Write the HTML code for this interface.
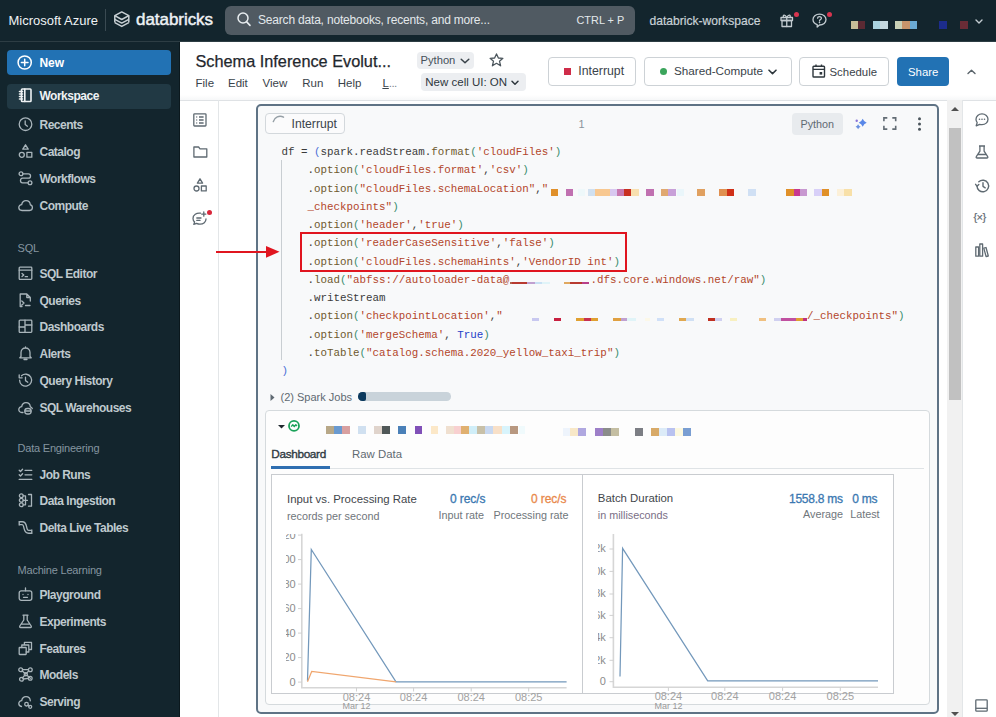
<!DOCTYPE html>
<html><head><meta charset="utf-8"><title>Databricks</title>
<style>
*{margin:0;padding:0;box-sizing:border-box}
html,body{width:996px;height:717px;overflow:hidden;background:#fff;font-family:"Liberation Sans",sans-serif;position:relative}
.a{position:absolute}
.t{position:absolute;white-space:nowrap;line-height:1}
.m{position:absolute;white-space:pre;line-height:1;font-family:"Liberation Mono",monospace;font-size:10.85px;color:#3b3b3b}
svg{position:absolute;overflow:visible}
.nav{font-weight:bold;font-size:12px;letter-spacing:-0.5px;color:#bfc9ce;left:39.5px}
.sec{font-size:11px;color:#8595a0;left:17.5px;letter-spacing:-0.2px}
.ic{fill:none;stroke:#a9b5bb;stroke-width:1.3;stroke-linecap:round;stroke-linejoin:round}
.btn{position:absolute;border:1px solid #cdd2d6;border-radius:4px;background:#fff}
.s{color:#b3462b}.f{color:#6e5a2e}.g{color:#3a8d6e}.b{color:#4a6fd6}.k{color:#1f3fc8}
.px{position:absolute;height:7px}
</style></head><body>
<!-- ============ TOP BAR ============ -->
<div class="a" style="left:0;top:0;width:996px;height:41px;background:#13252d"></div>
<div class="a" style="left:0;top:41px;width:996px;height:1px;background:#2d3d44"></div>
<div class="t" style="left:8.5px;top:13.5px;font-size:13px;color:#eef2f4">Microsoft Azure</div>
<div class="a" style="left:105px;top:9px;width:1px;height:22px;background:#3a4a52"></div>
<!-- databricks logo -->
<svg style="left:113.5px;top:11px" width="17" height="17" viewBox="0 0 17 17"><g fill="none" stroke="#c8d0d4" stroke-width="1.5" stroke-linejoin="round"><path d="M7.75 0.9 L14.8 4.7 L7.75 8.5 L0.8 4.7 Z"/><path d="M0.8 8.3 L7.75 12.1 L14.8 8.3"/><path d="M0.8 11.6 L7.75 15.4 L14.8 11.6"/><path d="M0.8 4.7 V11.6 M14.8 4.7 V11.6"/></g></svg>
<div class="t" style="left:136px;top:11px;font-size:17px;color:#eef2f4;letter-spacing:-0.05px;-webkit-text-stroke:0.45px #eef2f4">databricks</div>
<!-- search -->
<div class="a" style="left:225px;top:5.5px;width:410px;height:29px;border-radius:6px;background:#505a62"></div>
<svg style="left:237px;top:12px" width="14" height="15" viewBox="0 0 14 15"><circle cx="6" cy="6" r="5" fill="none" stroke="#e8edf0" stroke-width="1.5"/><path d="M9.7 9.9 L13 13.4" stroke="#e8edf0" stroke-width="1.6" stroke-linecap="round"/></svg>
<div class="t" style="left:258px;top:13.5px;font-size:12px;letter-spacing:-0.19px;color:#e3e8eb">Search data, notebooks, recents, and more...</div>
<div class="t" style="left:576.5px;top:14.5px;font-size:10.9px;color:#e3e8eb">CTRL + P</div>
<div class="t" style="left:649.5px;top:14.5px;font-size:12.1px;color:#c9d1d6;-webkit-text-stroke:0.2px #c9d1d6">databrick-workspace</div>
<!-- gift -->
<svg style="left:780px;top:13px" width="14" height="15" viewBox="0 0 14 15" class="ic"><g class="ic" style="stroke:#c3ccd1"><rect x="1" y="4.5" width="11.5" height="3"/><rect x="2" y="7.5" width="9.5" height="6"/><path d="M6.75 4.5 V13.5"/><path d="M6.75 4.5 C5 1 2.5 1.5 3.5 4.5 M6.75 4.5 C8.5 1 11 1.5 10 4.5"/></g></svg>
<div class="a" style="left:793.5px;top:11.5px;width:5px;height:5px;border-radius:50%;background:#d8354f"></div>
<!-- help -->
<svg style="left:812px;top:13px" width="16" height="15" viewBox="0 0 16 15"><g class="ic" style="stroke:#c3ccd1"><path d="M7.5 1.2 C11.3 1.2 14 3.6 14 6.6 C14 9.6 11.3 12 7.5 12 L5.2 14 L5.2 11.6 C2.8 10.8 1 8.9 1 6.6 C1 3.6 3.7 1.2 7.5 1.2 Z"/><path d="M5.6 5.2 C5.6 3.1 9.4 3.1 9.4 5.2 C9.4 6.6 7.5 6.6 7.5 8"/></g><circle cx="7.5" cy="9.6" r="0.8" fill="#c3ccd1"/></svg>
<div class="a" style="left:826.5px;top:11.5px;width:5px;height:5px;border-radius:50%;background:#d8354f"></div>
<!-- obfuscated username blocks -->
<div class="a" style="left:850.5px;top:21px;width:7.5px;height:7.5px;background:#c8bd98"></div>
<div class="a" style="left:858px;top:21px;width:6.5px;height:7.5px;background:#5b2a33"></div>
<div class="a" style="left:872.5px;top:21px;width:7.5px;height:7.5px;background:#a9d2df"></div>
<div class="a" style="left:880px;top:21px;width:7.5px;height:7.5px;background:#c4d8df"></div>
<div class="a" style="left:894.5px;top:21px;width:7.5px;height:7.5px;background:#c9d0b6"></div>
<div class="a" style="left:902px;top:21px;width:7.5px;height:7.5px;background:#c8946b"></div>
<div class="a" style="left:909.5px;top:21px;width:7.5px;height:7.5px;background:#6aaad4"></div>
<div class="a" style="left:938.5px;top:21px;width:8px;height:7.5px;background:#1c2c8c"></div>
<div class="a" style="left:960px;top:21px;width:8px;height:7.5px;background:#6a2c36"></div>
<svg style="left:975px;top:18.5px" width="8" height="5" viewBox="0 0 8 5"><path d="M1 1 L4 4 L7 1" fill="none" stroke="#c3ccd1" stroke-width="1.4" stroke-linecap="round" stroke-linejoin="round"/></svg>

<!-- ============ SIDEBAR ============ -->
<div class="a" style="left:0;top:42px;width:180px;height:675px;background:#13252d;border-right:1px solid #0b181d"></div>
<div class="a" style="left:6.5px;top:49.5px;width:164.5px;height:25.5px;border-radius:4px;background:#2272b4"></div>
<svg style="left:17px;top:54.7px" width="16" height="16" viewBox="0 0 16 16"><circle cx="7.7" cy="7.5" r="6.6" fill="none" stroke="#fff" stroke-width="1.5"/><path d="M7.7 4.2 V10.8 M4.4 7.5 H11" stroke="#fff" stroke-width="1.5" stroke-linecap="round"/></svg>
<div class="t nav" style="top:57px;color:#fff;font-size:12px;letter-spacing:-0.1px">New</div>
<div class="a" style="left:6.5px;top:83.5px;width:164.5px;height:25.5px;border-radius:4px;background:#213944"></div>
<svg style="left:17.5px;top:88.2px" width="15" height="15" viewBox="0 0 15 15"><g class="ic" style="stroke:#eef2f4;stroke-width:1.6"><rect x="3.5" y="1" width="9.5" height="12.5" rx="0.8"/><path d="M6.8 1 V13.5 M1.5 3.5 H4.5 M1.5 6 H4.5 M1.5 8.5 H4.5 M1.5 11 H4.5"/></g></svg>
<div class="t nav" style="top:90.4px;color:#eef2f4">Workspace</div>
<svg style="left:17.5px;top:116.5px" width="15" height="15" viewBox="0 0 15 15"><g class="ic"><circle cx="7.5" cy="7.2" r="6.3"/><path d="M7.2 3.8 V7.5 L9.4 9.2"/></g></svg>
<div class="t nav" style="top:118.5px">Recents</div>
<svg style="left:17.5px;top:143.7px" width="15" height="15" viewBox="0 0 15 15"><g class="ic"><path d="M7.5 0.8 L10.2 5.2 H4.8 Z"/><circle cx="3.8" cy="10.8" r="2.5"/><rect x="8.9" y="8.3" width="4.9" height="4.9"/></g></svg>
<div class="t nav" style="top:145.7px">Catalog</div>
<svg style="left:17.5px;top:170.8px" width="15" height="15" viewBox="0 0 15 15"><g class="ic"><circle cx="3" cy="2.8" r="1.9"/><circle cx="12" cy="11.8" r="1.9"/><path d="M4.9 2.8 H10.5 C13.2 2.8 13.2 7.2 10.5 7.2 H4.5 C1.8 7.2 1.8 11.8 4.5 11.8 H10"/></g></svg>
<div class="t nav" style="top:172.8px">Workflows</div>
<svg style="left:17.5px;top:197.9px" width="15" height="15" viewBox="0 0 15 15"><g class="ic"><path d="M4 12.5 C1.8 12.5 0.8 11 0.8 9.6 C0.8 7.9 2.1 6.7 3.7 6.7 C4.1 4 6 2.6 8 2.6 C10.6 2.6 12.2 4.6 12.3 6.8 C13.6 7 14.4 8.2 14.4 9.6 C14.4 11.2 13.2 12.5 11.5 12.5 Z"/></g></svg>
<div class="t nav" style="top:199.9px">Compute</div>
<svg style="left:17.5px;top:266.2px" width="15" height="15" viewBox="0 0 15 15"><g class="ic"><rect x="1.2" y="1.2" width="12.6" height="12.2" rx="0.8"/><path d="M1.2 4.2 H13.8 M4 7.5 L5.8 9 L4 10.5 M7.2 10.7 H9.5"/></g></svg>
<div class="t nav" style="top:268.2px">SQL Editor</div>
<svg style="left:17.5px;top:292.5px" width="15" height="15" viewBox="0 0 15 15"><g class="ic"><path d="M8.8 1 H2.2 V13.5 H4 M8.8 1 L12.3 4.5 V8 M8.8 1 V4.5 H12.3 M3.8 8 L6 10 L3.8 12 M7.5 12.5 H12"/></g></svg>
<div class="t nav" style="top:294.5px">Queries</div>
<svg style="left:17.5px;top:319.3px" width="15" height="15" viewBox="0 0 15 15"><g class="ic"><rect x="1.2" y="1.2" width="12.6" height="12.2" rx="0.8"/><path d="M7 1.2 V13.4 M1.2 8 H7 M7 6 H13.8"/></g></svg>
<div class="t nav" style="top:321.3px">Dashboards</div>
<svg style="left:17.5px;top:346.0px" width="15" height="15" viewBox="0 0 15 15"><g class="ic"><path d="M3 10.5 V6.5 C3 3.8 5 2 7.5 2 C10 2 12 3.8 12 6.5 V10.5 L13.2 11.8 H1.8 Z M6 13.5 H9 M7.5 0.8 V2"/></g></svg>
<div class="t nav" style="top:348.0px">Alerts</div>
<svg style="left:17.5px;top:372.9px" width="15" height="15" viewBox="0 0 15 15"><g class="ic"><path d="M1.6 7.2 A6 6 0 1 0 3.5 2.8 M1.2 1.8 V4.8 H4.2 M7.5 4.2 V7.6 L9.8 9.2"/></g></svg>
<div class="t nav" style="top:374.9px">Query History</div>
<svg style="left:17.5px;top:399.6px" width="15" height="15" viewBox="0 0 15 15"><g class="ic"><path d="M5 12.5 H3.8 C2 12.5 0.8 11.2 0.8 9.6 C0.8 7.9 2.1 6.7 3.7 6.7 C4.1 4 6 2.6 8 2.6 C10.6 2.6 12.2 4.6 12.3 6.8 C13.3 7 14 7.6 14.3 8.6"/><rect x="6.8" y="8.5" width="6.3" height="5.5" rx="2.5"/><path d="M7 11 H13"/></g></svg>
<div class="t nav" style="top:401.6px">SQL Warehouses</div>
<svg style="left:17.5px;top:467.1px" width="15" height="15" viewBox="0 0 15 15"><g class="ic"><path d="M1.2 3.2 L2.5 4.5 L4.6 2.2 M1.2 7.7 L2.5 9 L4.6 6.7 M7 3.3 H13.8 M7 7.8 H13.8 M1.2 12.4 H13.8"/></g></svg>
<div class="t nav" style="top:469.1px">Job Runs</div>
<svg style="left:17.5px;top:493.2px" width="15" height="15" viewBox="0 0 15 15"><g class="ic"><circle cx="3.3" cy="2.8" r="1.9"/><circle cx="3.3" cy="7.3" r="1.9"/><circle cx="3.3" cy="11.8" r="1.9"/><path d="M5.2 2.8 H7.5 V11.8 H5.2 M5.2 7.3 H9.5 M10.5 1.5 H13.5 V13.2 H10.5"/></g></svg>
<div class="t nav" style="top:495.2px">Data Ingestion</div>
<svg style="left:17.5px;top:519.9px" width="15" height="15" viewBox="0 0 15 15"><path d="M1.2 3.2 H4.2 C6.6 3.2 6.8 5.2 7.3 7.5 C7.8 9.8 8.1 11.8 10.6 11.8 H13.8" fill="none" stroke="#a9b5bb" stroke-width="4.2"/><path d="M1.2 3.2 H4.2 C6.6 3.2 6.8 5.2 7.3 7.5 C7.8 9.8 8.1 11.8 10.6 11.8 H13.8" fill="none" stroke="#13252d" stroke-width="1.6"/><path d="M1.2 0.9 V5.5 M13.8 9.5 V14.1" stroke="#a9b5bb" stroke-width="1.3"/></svg>
<div class="t nav" style="top:521.9px">Delta Live Tables</div>
<svg style="left:17.5px;top:587.4px" width="15" height="15" viewBox="0 0 15 15"><g class="ic"><rect x="1.2" y="3.8" width="12.6" height="9.5" rx="2"/><path d="M7.5 1 V3.8 M5 7.5 V7.6 M10 7.5 V7.6 M5.5 10.3 H9.5"/></g></svg>
<div class="t nav" style="top:589.4px">Playground</div>
<svg style="left:17.5px;top:614.1px" width="15" height="15" viewBox="0 0 15 15"><g class="ic"><path d="M5 1.2 H10 M5.8 1.2 V6 L1.8 12 C1.4 12.8 1.8 13.5 2.7 13.5 H12.3 C13.2 13.5 13.6 12.8 13.2 12 L9.2 6 V1.2 M3.5 10.2 H11.5"/></g></svg>
<div class="t nav" style="top:616.1px">Experiments</div>
<svg style="left:17.5px;top:640.5px" width="15" height="15" viewBox="0 0 15 15"><g class="ic"><rect x="1.2" y="6.5" width="7" height="7" rx="0.5"/><path d="M3.8 6.5 V4 H10.8 V11 H8.2 M6.4 4 V1.4 H13.5 V8.5 H10.8"/></g></svg>
<div class="t nav" style="top:642.5px">Features</div>
<svg style="left:17.5px;top:667.3px" width="15" height="15" viewBox="0 0 15 15"><g class="ic"><circle cx="2.7" cy="2.7" r="1.9"/><circle cx="12.3" cy="2.7" r="1.9"/><circle cx="3.5" cy="12.2" r="1.9"/><circle cx="12.2" cy="11.2" r="1.9"/><circle cx="7.8" cy="7.2" r="1.6"/><path d="M4.3 3.9 L12.3 11.2 M10.7 3.9 L4.3 11 M4.5 2.7 H10.4 M5.4 12 L10.4 11.3"/></g></svg>
<div class="t nav" style="top:669.3px">Models</div>
<svg style="left:17.5px;top:694.0px" width="15" height="15" viewBox="0 0 15 15"><g class="ic"><path d="M3.5 12.5 C1.8 12.3 0.8 11 0.8 9.6 C0.8 7.9 2.1 6.7 3.7 6.7 C4.1 4 6 2.6 8 2.6 C10.6 2.6 12.2 4.6 12.3 6.8"/><circle cx="8.5" cy="10.2" r="1.8"/><circle cx="12.2" cy="12.8" r="1.5"/><path d="M10 11.2 L11 12"/></g></svg>
<div class="t nav" style="top:696.0px">Serving</div>
<div class="t sec" style="top:242.8px">SQL</div>
<div class="t sec" style="top:443.1px">Data Engineering</div>
<div class="t sec" style="top:564.5px">Machine Learning</div>

<!-- ============ NOTEBOOK HEADER ============ -->
<div class="a" style="left:180px;top:99.5px;width:816px;height:1px;background:#dfe2e5"></div>
<div class="a" style="left:180px;top:95px;width:816px;height:4.5px;background:linear-gradient(#fff,#f6f7f8)"></div>
<div class="t" style="left:195.5px;top:52.5px;font-size:16.3px;color:#1f272d;-webkit-text-stroke:0.25px #1f272d">Schema Inference Evolut...</div>
<div class="t" style="left:195.5px;top:78.2px;font-size:11.5px;color:#3a434a">File</div>
<div class="t" style="left:228px;top:78.2px;font-size:11.5px;color:#3a434a">Edit</div>
<div class="t" style="left:262.5px;top:78.2px;font-size:11.5px;color:#3a434a">View</div>
<div class="t" style="left:302.3px;top:78.2px;font-size:11.5px;color:#3a434a">Run</div>
<div class="t" style="left:337.8px;top:78.2px;font-size:11.5px;color:#3a434a">Help</div>
<div class="t" style="left:382.4px;top:78.2px;font-size:11.5px;color:#3a434a"><span style="text-decoration:underline">L</span><span style="color:#7a848b;letter-spacing:-0.6px">...</span></div>
<div class="a" style="left:416.5px;top:51.5px;width:57px;height:17.5px;border-radius:4px;background:#eceef1"></div>
<div class="t" style="left:420.5px;top:55px;font-size:11.2px;color:#46515a">Python</div>
<svg style="left:460px;top:57.5px" width="10" height="6" viewBox="0 0 10 6"><path d="M1.2 1.2 L5 4.8 L8.8 1.2" fill="none" stroke="#3a434a" stroke-width="1.5" stroke-linecap="round" stroke-linejoin="round"/></svg>
<svg style="left:489px;top:53px" width="15" height="14" viewBox="0 0 15 14"><path d="M7.5 0.9 L9.4 5 L13.9 5.3 L10.5 8.2 L11.6 12.8 L7.5 10.3 L3.4 12.8 L4.5 8.2 L1.1 5.3 L5.6 5 Z" fill="none" stroke="#4b555c" stroke-width="1.3" stroke-linejoin="round"/></svg>
<div class="a" style="left:421px;top:73.3px;width:104.5px;height:17.5px;border-radius:4px;background:#eceef1"></div>
<div class="t" style="left:425.3px;top:77.3px;font-size:11.5px;color:#2e373d">New cell UI: ON</div>
<svg style="left:511px;top:79.5px" width="8" height="6" viewBox="0 0 8 6"><path d="M1 1.3 L4 4.3 L7 1.3" fill="none" stroke="#2e373d" stroke-width="1.5" stroke-linecap="round" stroke-linejoin="round"/></svg>

<div class="btn" style="left:547.5px;top:57px;width:88.5px;height:28.5px"></div>
<div class="a" style="left:563.5px;top:67.8px;width:7.3px;height:7.3px;background:#cf2c49"></div>
<div class="t" style="left:578.3px;top:65px;font-size:12.3px;color:#3a434a">Interrupt</div>
<div class="btn" style="left:644px;top:57px;width:148px;height:28.5px"></div>
<div class="a" style="left:659.7px;top:67.8px;width:7px;height:7px;border-radius:50%;background:#3ba55c"></div>
<div class="t" style="left:674px;top:65px;font-size:11.7px;color:#3a434a">Shared-Compute</div>
<svg style="left:767.5px;top:68.5px" width="9" height="6" viewBox="0 0 9 6"><path d="M1 1.2 L4.5 4.6 L8 1.2" fill="none" stroke="#2e373d" stroke-width="1.6" stroke-linecap="round" stroke-linejoin="round"/></svg>
<div class="btn" style="left:799px;top:57px;width:89.5px;height:28.5px"></div>
<svg style="left:812px;top:64px" width="14" height="14" viewBox="0 0 14 14"><rect x="1" y="2.2" width="11.5" height="10.8" rx="0.8" fill="none" stroke="#2e373d" stroke-width="1.4"/><path d="M1 5.4 H12.5 M4 0.6 V3 M9.5 0.6 V3" stroke="#2e373d" stroke-width="1.4"/><rect x="7.6" y="8" width="2.6" height="2.6" fill="#2e373d"/></svg>
<div class="t" style="left:829.5px;top:66.5px;font-size:11.4px;color:#3a434a">Schedule</div>
<div class="a" style="left:896.5px;top:57px;width:52.5px;height:28.5px;border-radius:4px;background:#2272b4"></div>
<div class="t" style="left:908px;top:66.5px;font-size:11.4px;color:#fff">Share</div>
<svg style="left:967px;top:68.5px" width="9" height="6" viewBox="0 0 9 6"><path d="M1 4.6 L4.5 1.2 L8 4.6" fill="none" stroke="#5a646b" stroke-width="1.4" stroke-linecap="round" stroke-linejoin="round"/></svg>

<!-- ============ LEFT NOTEBOOK TOOLBAR ============ -->
<div class="a" style="left:218px;top:100px;width:1px;height:617px;background:#e3e6e8"></div>
<svg style="left:193px;top:112.5px" width="14" height="14" viewBox="0 0 14 14"><g fill="none" stroke="#5f6a72" stroke-width="1.3"><rect x="0.8" y="0.8" width="12.2" height="12.2" rx="0.8"/><path d="M3.3 4 H4.2 M3.3 7 H4.2 M3.3 10 H4.2 M6 4 H10.6 M6 7 H10.6 M6 10 H10.6"/></g></svg>
<svg style="left:192.5px;top:146px" width="15" height="12" viewBox="0 0 15 12"><path d="M0.9 1 H5.6 L7 2.8 H13.8 V11 H0.9 Z" fill="none" stroke="#5f6a72" stroke-width="1.3" stroke-linejoin="round"/></svg>
<svg style="left:193px;top:177.5px" width="14" height="14" viewBox="0 0 14 14"><g fill="none" stroke="#5f6a72" stroke-width="1.3" stroke-linejoin="round"><path d="M7 0.8 L9.6 5.2 H4.4 Z"/><circle cx="3.5" cy="10.5" r="2.5"/><rect x="8.4" y="8" width="4.8" height="4.9"/></g></svg>
<svg style="left:192px;top:211px" width="16" height="15" viewBox="0 0 16 15"><g fill="none" stroke="#5f6a72" stroke-width="1.3" stroke-linecap="round" stroke-linejoin="round"><path d="M8.5 2.2 C4.5 1.6 1 4 1 7.4 C1 8.8 1.6 10 2.6 11 L1.8 13.4 L4.6 12.4 C5.6 12.9 6.8 13.2 8 13.2 C11.5 13.2 14 10.8 14 8"/><path d="M4.8 7 H9 M4.8 9.4 H8"/><path d="M11.8 1 V5.2 M9.7 3.1 H13.9"/></g></svg>
<div class="a" style="left:206.8px;top:209.5px;width:5px;height:5px;border-radius:50%;background:#d8263a"></div>

<!-- ============ CELL ============ -->
<div class="a" style="left:256px;top:104px;width:683px;height:610px;border:2px solid #5f7385;border-radius:5px;background:#f8f9fa"></div>
<div class="a" style="left:265px;top:112.8px;width:80px;height:21.5px;border:1px solid #d3d8dc;border-radius:4px;background:#fbfbfc"></div>
<svg style="left:272px;top:116px" width="14" height="14" viewBox="0 0 14 14"><path d="M1.3 5.6 A7 7 0 0 1 11.5 1.1" fill="none" stroke="#959fa6" stroke-width="1.5" stroke-linecap="round"/></svg>
<div class="t" style="left:291.5px;top:118px;font-size:12.2px;color:#3a434a">Interrupt</div>
<div class="t" style="left:578.5px;top:118.5px;font-size:11px;color:#8a949b">1</div>
<div class="a" style="left:792px;top:113px;width:50.5px;height:21.5px;border-radius:4px;background:#e8ebee"></div>
<div class="t" style="left:800.5px;top:119px;font-size:10.8px;color:#5f6a72">Python</div>
<svg style="left:854px;top:117px" width="14" height="14" viewBox="0 0 14 14"><path d="M8.70 1.70 Q9.82 4.58 12.70 5.70 Q9.82 6.82 8.70 9.70 Q7.58 6.82 4.70 5.70 Q7.58 4.58 8.70 1.70 Z" fill="#5a88e8"/><path d="M4.10 7.20 Q4.80 9.00 6.60 9.70 Q4.80 10.40 4.10 12.20 Q3.40 10.40 1.60 9.70 Q3.40 9.00 4.10 7.20 Z" fill="#6a90e0"/><circle cx="2.7" cy="3.7" r="1.2" fill="#8a74d8"/></svg>
<svg style="left:883px;top:117px" width="14" height="14" viewBox="0 0 14 14"><path d="M0.9 4.3 V0.9 H4.3 M9.3 0.9 H12.7 V4.3 M12.7 8.7 V12.1 H9.3 M4.3 12.1 H0.9 V8.7" fill="none" stroke="#626c74" stroke-width="1.6"/></svg>
<svg style="left:917px;top:117px" width="5" height="14" viewBox="0 0 5 14"><circle cx="2.5" cy="1.8" r="1.5" fill="#4b555c"/><circle cx="2.5" cy="7" r="1.5" fill="#4b555c"/><circle cx="2.5" cy="12.2" r="1.5" fill="#4b555c"/></svg>
<div class="a" style="left:281px;top:160px;width:1px;height:200px;background:#c9ced2"></div>
<div class="m" style="left:281.50px;top:147.10px">df = <span class="b">(</span>spark.readStream.<span class="f">format</span><span class="g">(</span><span class="s">'cloudFiles'</span><span class="g">)</span></div>
<div class="m" style="left:307.53px;top:165.35px">.<span class="f">option</span><span class="g">(</span><span class="s">'cloudFiles.format'</span>,<span class="s">'csv'</span><span class="g">)</span></div>
<div class="m" style="left:307.53px;top:183.60px">.<span class="f">option</span><span class="g">(</span><span class="s">"cloudFiles.schemaLocation"</span>,<span class="s">"</span></div>
<div class="m" style="left:307.53px;top:201.85px"><span class="s">_checkpoints"</span><span class="g">)</span></div>
<div class="m" style="left:307.53px;top:220.10px">.<span class="f">option</span><span class="g">(</span><span class="s">'header'</span>,<span class="s">'true'</span><span class="g">)</span></div>
<div class="m" style="left:307.53px;top:238.35px">.<span class="f">option</span><span class="g">(</span><span class="s">'readerCaseSensitive'</span>,<span class="s">'false'</span><span class="g">)</span></div>
<div class="m" style="left:307.53px;top:256.60px">.<span class="f">option</span><span class="g">(</span><span class="s">'cloudFiles.schemaHints'</span>,<span class="s">'VendorID int'</span><span class="g">)</span></div>
<div class="m" style="left:307.53px;top:274.85px">.<span class="f">load</span><span class="g">(</span><span class="s">"abfss://autoloader-data@</span></div>
<div class="m" style="left:307.53px;top:293.10px">.writeStream</div>
<div class="m" style="left:307.53px;top:311.35px">.<span class="f">option</span><span class="g">(</span><span class="s">'checkpointLocation'</span>,<span class="s">"</span></div>
<div class="m" style="left:307.53px;top:329.60px">.<span class="f">option</span><span class="g">(</span><span class="s">'mergeSchema'</span>, <span class="k">True</span><span class="g">)</span></div>
<div class="m" style="left:307.53px;top:347.85px">.<span class="f">toTable</span><span class="g">(</span><span class="s">"catalog.schema.2020_yellow_taxi_trip"</span><span class="g">)</span></div>
<div class="m" style="left:281.50px;top:366.10px"><span class="b">)</span></div>
<div class="m" style="left:590.6px;top:274.85px"><span class="s">.dfs.core.windows.net/raw"</span><span class="g">)</span></div>
<div class="m" style="left:807px;top:311.35px"><span class="s">/_checkpoints"</span><span class="g">)</span></div>
<div class="px" style="left:550.5px;top:188.5px;width:7.5px;background:#e0902a"></div>
<div class="px" style="left:565.8px;top:188.5px;width:7.5px;background:#c070b0"></div>
<div class="px" style="left:577.8px;top:188.5px;width:6.8px;background:#eef8fa"></div>
<div class="px" style="left:588px;top:188.5px;width:6.8px;background:#d0e0f0"></div>
<div class="px" style="left:594.8px;top:188.5px;width:15.2px;background:#f8c890"></div>
<div class="px" style="left:610px;top:188.5px;width:7.0px;background:#d8c8f0"></div>
<div class="px" style="left:617px;top:188.5px;width:6.9px;background:#c878b0"></div>
<div class="px" style="left:623.9px;top:188.5px;width:7.5px;background:#c83020"></div>
<div class="px" style="left:631.4px;top:188.5px;width:7.8px;background:#f8e0b0"></div>
<div class="px" style="left:646px;top:188.5px;width:7.5px;background:#c070b0"></div>
<div class="px" style="left:660.7px;top:188.5px;width:7.5px;background:#e0a870"></div>
<div class="px" style="left:668.2px;top:188.5px;width:7.8px;background:#c8a0d8"></div>
<div class="px" style="left:676.8px;top:188.5px;width:6.8px;background:#eaf6fa"></div>
<div class="px" style="left:697px;top:188.5px;width:7.8px;background:#e0a060"></div>
<div class="px" style="left:719.4px;top:188.5px;width:7.6px;background:#e09050"></div>
<div class="px" style="left:727px;top:188.5px;width:7.0px;background:#d03018"></div>
<div class="px" style="left:748.4px;top:188.5px;width:7.6px;background:#d0e0f4"></div>
<div class="px" style="left:786px;top:188.5px;width:7.5px;background:#e09028"></div>
<div class="px" style="left:793.5px;top:188.5px;width:6.8px;background:#c83890"></div>
<div class="px" style="left:800.3px;top:188.5px;width:6.7px;background:#c898d0"></div>
<div class="px" style="left:814.3px;top:188.5px;width:7.5px;background:#d8d0f8"></div>
<div class="px" style="left:821.8px;top:188.5px;width:7.5px;background:#e09028"></div>
<div class="px" style="left:837px;top:188.5px;width:7.0px;background:#fcf0d8"></div>
<div class="px" style="left:844px;top:188.5px;width:7.5px;background:#f8e0a8"></div>
<div class="px" style="left:510px;top:282px;height:2px;width:2.3px;background:#b0604a"></div>
<div class="px" style="left:512.3px;top:282px;height:2px;width:15.0px;background:#b83a30"></div>
<div class="px" style="left:527.3px;top:282px;height:2px;width:7.9px;background:#c0a0d0"></div>
<div class="px" style="left:535.2px;top:282px;height:2px;width:6.6px;background:#c8e0f4"></div>
<div class="px" style="left:541.8px;top:282px;height:2px;width:8.4px;background:#e0f4f8"></div>
<div class="px" style="left:564px;top:282px;height:2px;width:6.1px;background:#e0a860"></div>
<div class="px" style="left:570.1px;top:282px;height:2px;width:11.5px;background:#b83a30"></div>
<div class="px" style="left:581.6px;top:282px;height:2px;width:7.2px;background:#b8408a"></div>
<div class="px" style="left:532.2px;top:318px;height:2.5px;width:7.3px;background:#c8c8f0"></div>
<div class="px" style="left:554.3px;top:318px;height:2.5px;width:7.0px;background:#c82040"></div>
<div class="px" style="left:576px;top:318px;height:2.5px;width:7.8px;background:#e0a030"></div>
<div class="px" style="left:583.8px;top:318px;height:2.5px;width:7.0px;background:#c83050"></div>
<div class="px" style="left:590.8px;top:318px;height:2.5px;width:7.2px;background:#e0a030"></div>
<div class="px" style="left:612.7px;top:318px;height:2.5px;width:8.0px;background:#e0a040"></div>
<div class="px" style="left:620.7px;top:318px;height:2.5px;width:6.3px;background:#c0a0d0"></div>
<div class="px" style="left:627px;top:318px;height:2.5px;width:8.5px;background:#e0f4f8"></div>
<div class="px" style="left:645px;top:318px;height:2.5px;width:5.0px;background:#fcf8e8"></div>
<div class="px" style="left:656.6px;top:318px;height:2.5px;width:7.4px;background:#d0e0f8"></div>
<div class="px" style="left:678.7px;top:318px;height:2.5px;width:7.3px;background:#e0a850"></div>
<div class="px" style="left:686px;top:318px;height:2.5px;width:7.5px;background:#d0e0f4"></div>
<div class="px" style="left:707.7px;top:318px;height:2.5px;width:7.7px;background:#c03020"></div>
<div class="px" style="left:715.4px;top:318px;height:2.5px;width:6.6px;background:#d0d0f0"></div>
<div class="px" style="left:729.8px;top:318px;height:2.5px;width:7.7px;background:#f8f0c0"></div>
<div class="px" style="left:758.5px;top:318px;height:2.5px;width:7.7px;background:#f0c080"></div>
<div class="px" style="left:774px;top:318px;height:2.5px;width:6.6px;background:#d0d0f0"></div>
<div class="px" style="left:780.6px;top:318px;height:2.5px;width:15.4px;background:#c050a0"></div>
<div class="px" style="left:796px;top:318px;height:2.5px;width:6.7px;background:#e0a030"></div>
<div class="px" style="left:802.7px;top:318px;height:2.5px;width:4.3px;background:#c03080"></div>
<div class="a" style="left:299.5px;top:232px;width:327px;height:40px;border:2px solid #e0151f"></div>
<div class="a" style="left:216px;top:250.7px;width:52px;height:2px;background:#e0151f"></div>
<svg style="left:266px;top:246px" width="14" height="12" viewBox="0 0 14 12"><path d="M0 0 L13.5 5.8 L0 11.8 Z" fill="#e0151f"/></svg>
<!-- ============ OUTPUT ============ -->
<svg style="left:269.5px;top:393.5px" width="5" height="7" viewBox="0 0 5 7"><path d="M0.5 0 L4.5 3.5 L0.5 7 Z" fill="#5f6a72"/></svg>
<div class="t" style="left:280.5px;top:391.5px;font-size:11px;color:#5f6a72">(2) Spark Jobs</div>
<div class="a" style="left:358px;top:392.3px;width:92.5px;height:8.5px;border-radius:4.25px;background:#c9d3da"></div>
<div class="a" style="left:358px;top:392.3px;width:8px;height:8.5px;border-radius:4.25px 2px 2px 4.25px;background:#0c3a5e"></div>
<div class="a" style="left:264.5px;top:409.5px;width:665.5px;height:295px;border:1.5px solid #d5dadd;border-radius:4px;background:#fdfdfd"></div>
<svg style="left:277.5px;top:424.5px" width="7" height="4" viewBox="0 0 7 4"><path d="M0 0 L7 0 L3.5 3.6 Z" fill="#1f272d"/></svg>
<svg style="left:287.5px;top:420.3px" width="13" height="12" viewBox="0 0 13 12"><circle cx="6" cy="5.9" r="5" fill="none" stroke="#1ba25a" stroke-width="1.8"/><path d="M3.2 6.6 L4.8 4.8 L6.3 6.6 L7.8 4.8 L9 6" fill="none" stroke="#1ba25a" stroke-width="1.4" stroke-linejoin="round"/></svg>
<div class="px" style="left:326px;top:426px;height:7.8px;width:7.6px;background:#b8a888"></div>
<div class="px" style="left:333.6px;top:426px;height:7.8px;width:8.2px;background:#6a9ad0"></div>
<div class="px" style="left:341.8px;top:426px;height:7.8px;width:8.0px;background:#d8a0a0"></div>
<div class="px" style="left:358px;top:426px;height:7.8px;width:8.0px;background:#d0e0f0"></div>
<div class="px" style="left:374px;top:426px;height:7.8px;width:8.0px;background:#e0d4cc"></div>
<div class="px" style="left:382px;top:426px;height:7.8px;width:8.0px;background:#505858"></div>
<div class="px" style="left:397.8px;top:426px;height:7.8px;width:7.8px;background:#4a80b8"></div>
<div class="px" style="left:414.5px;top:426px;height:7.8px;width:7.3px;background:#8050b8"></div>
<div class="px" style="left:430.5px;top:426px;height:7.8px;width:7.5px;background:#fce8c8"></div>
<div class="px" style="left:446px;top:426px;height:7.8px;width:8.0px;background:#f0e0d0"></div>
<div class="px" style="left:454px;top:426px;height:7.8px;width:7.0px;background:#f8d0d0"></div>
<div class="px" style="left:461px;top:426px;height:7.8px;width:8.0px;background:#e0b070"></div>
<div class="px" style="left:469px;top:426px;height:7.8px;width:8.0px;background:#d0eef8"></div>
<div class="px" style="left:477px;top:426px;height:7.8px;width:8.0px;background:#c8c0a8"></div>
<div class="px" style="left:485px;top:426px;height:7.8px;width:8.0px;background:#c8d8f0"></div>
<div class="px" style="left:493px;top:426px;height:7.8px;width:9.0px;background:#f8e0c8"></div>
<div class="px" style="left:502px;top:426px;height:7.8px;width:8.0px;background:#d8f4fc"></div>
<div class="px" style="left:510px;top:426px;height:7.8px;width:8.0px;background:#b89880"></div>
<div class="px" style="left:519px;top:426px;height:7.8px;width:6.0px;background:#f0fafc"></div>
<div class="px" style="left:563px;top:428px;height:7.8px;width:7.0px;background:#eef4fc"></div>
<div class="px" style="left:570px;top:428px;height:7.8px;width:8.0px;background:#f8e8c8"></div>
<div class="px" style="left:578px;top:428px;height:7.8px;width:8.0px;background:#b0a8e0"></div>
<div class="px" style="left:595px;top:428px;height:7.8px;width:8.0px;background:#9d7fc8"></div>
<div class="px" style="left:603px;top:428px;height:7.8px;width:8.0px;background:#8a8c8a"></div>
<div class="px" style="left:611px;top:428px;height:7.8px;width:8.0px;background:#c4bea2"></div>
<div class="px" style="left:635px;top:428px;height:7.8px;width:7.6px;background:#7c7e84"></div>
<div class="px" style="left:651px;top:428px;height:7.8px;width:7.6px;background:#d8aa68"></div>
<div class="px" style="left:658.6px;top:428px;height:7.8px;width:8.1px;background:#dcebf8"></div>
<div class="px" style="left:666.7px;top:428px;height:7.8px;width:8.0px;background:#b9c2f0"></div>
<div class="px" style="left:674.7px;top:428px;height:7.8px;width:8.0px;background:#fcf8e0"></div>
<div class="px" style="left:682.7px;top:428px;height:7.8px;width:8.1px;background:#7a9ed2"></div>
<div class="t" style="left:271.3px;top:449px;font-size:11.8px;letter-spacing:-0.35px;color:#2f3a42;-webkit-text-stroke:0.35px #2f3a42">Dashboard</div>
<div class="t" style="left:352px;top:449px;font-size:11.4px;color:#5f6a72">Raw Data</div>
<div class="a" style="left:271px;top:467.5px;width:653px;height:1px;background:#dfe3e6"></div>
<div class="a" style="left:271px;top:466px;width:58.5px;height:3px;background:#2f6fb1"></div>
<div class="a" style="left:270.5px;top:474px;width:312.5px;height:220px;border:1.5px solid #c9ccd0;background:#fff"></div>
<div class="a" style="left:581.5px;top:474px;width:312.5px;height:220px;border:1.5px solid #c9ccd0;background:#fff"></div>
<div class="t" style="left:287px;top:494px;font-size:11.4px;color:#3f464b">Input vs. Processing Rate</div>
<div class="t" style="left:287px;top:510.5px;font-size:10.8px;color:#6f767b">records per second</div>
<div class="t" style="left:450px;top:492.5px;font-size:12px;color:#3b78b1;letter-spacing:-0.1px;-webkit-text-stroke:0.3px #3b78b1">0 rec/s</div>
<div class="t" style="left:531px;top:492.5px;font-size:12px;color:#e9894c;letter-spacing:-0.1px;-webkit-text-stroke:0.3px #e9894c">0 rec/s</div>
<div class="t" style="left:438.5px;top:510px;font-size:10.8px;color:#6f767b">Input rate</div>
<div class="t" style="left:493.5px;top:510px;font-size:10.8px;color:#6f767b">Processing rate</div>
<div class="t" style="left:597.8px;top:493px;font-size:11.4px;color:#3f464b">Batch Duration</div>
<div class="t" style="left:597.8px;top:510px;font-size:10.8px;color:#7a6f86">in milliseconds</div>
<div class="t" style="left:789px;top:492.5px;font-size:12px;color:#3b78b1;letter-spacing:-0.25px;-webkit-text-stroke:0.3px #3b78b1">1558.8 ms</div>
<div class="t" style="left:852.3px;top:492.5px;font-size:12px;color:#3b78b1;letter-spacing:-0.25px;-webkit-text-stroke:0.3px #3b78b1">0 ms</div>
<div class="t" style="left:803px;top:509px;font-size:10.8px;color:#6f767b">Average</div>
<div class="t" style="left:850.2px;top:509px;font-size:10.8px;color:#6f767b">Latest</div>
<svg style="left:0;top:0" width="996" height="717" viewBox="0 0 996 717">
<path d="M301.8 533.7 V687.7 H566.6" fill="none" stroke="#d6d6d6" stroke-width="1.6"/>
<path d="M298 535.1 H302" stroke="#d0d0d0" stroke-width="1"/>
<path d="M298 559.6 H302" stroke="#d0d0d0" stroke-width="1"/>
<path d="M298 584.1 H302" stroke="#d0d0d0" stroke-width="1"/>
<path d="M298 608.6 H302" stroke="#d0d0d0" stroke-width="1"/>
<path d="M298 633.1 H302" stroke="#d0d0d0" stroke-width="1"/>
<path d="M298 657.6 H302" stroke="#d0d0d0" stroke-width="1"/>
<path d="M298 682.1 H302" stroke="#d0d0d0" stroke-width="1"/>
<path d="M356.5 687.7 V691.5" stroke="#d0d0d0" stroke-width="1"/>
<path d="M413.6 687.7 V691.5" stroke="#d0d0d0" stroke-width="1"/>
<path d="M471.2 687.7 V691.5" stroke="#d0d0d0" stroke-width="1"/>
<path d="M528.7 687.7 V691.5" stroke="#d0d0d0" stroke-width="1"/>
<polyline points="307.5,680.8 311.3,549.5 396,681.8 566.6,681.8" fill="none" stroke="#7398bb" stroke-width="1.25"/>
<polyline points="307.5,681.8 311.7,671.5 396,681.8" fill="none" stroke="#f0a66e" stroke-width="1.2"/>
<path d="M613.4 534 V687.3 H878" fill="none" stroke="#d6d6d6" stroke-width="1.6"/>
<path d="M609.5 549.0 H613.6" stroke="#d0d0d0" stroke-width="1"/>
<path d="M609.5 571.4 H613.6" stroke="#d0d0d0" stroke-width="1"/>
<path d="M609.5 594.0 H613.6" stroke="#d0d0d0" stroke-width="1"/>
<path d="M609.5 615.4 H613.6" stroke="#d0d0d0" stroke-width="1"/>
<path d="M609.5 637.7 H613.6" stroke="#d0d0d0" stroke-width="1"/>
<path d="M609.5 660.3 H613.6" stroke="#d0d0d0" stroke-width="1"/>
<path d="M609.5 681.7 H613.6" stroke="#d0d0d0" stroke-width="1"/>
<path d="M668.4 687.3 V691" stroke="#d0d0d0" stroke-width="1"/>
<path d="M724.8 687.3 V691" stroke="#d0d0d0" stroke-width="1"/>
<path d="M782.6 687.3 V691" stroke="#d0d0d0" stroke-width="1"/>
<path d="M840.3 687.3 V691" stroke="#d0d0d0" stroke-width="1"/>
<polyline points="620,676.6 622.6,548.3 707.7,680.9 878,680.9" fill="none" stroke="#7398bb" stroke-width="1.25"/>
</svg>
<div class="a" style="left:286.2px;top:534.4px;width:9.5px;height:156px;overflow:hidden">
<div class="t" style="right:0;top:-4.8px;font-size:11px;color:#8c8c8c">120</div>
<div class="t" style="right:0;top:19.7px;font-size:11px;color:#8c8c8c">100</div>
<div class="t" style="right:0;top:44.2px;font-size:11px;color:#8c8c8c">80</div>
<div class="t" style="right:0;top:68.7px;font-size:11px;color:#8c8c8c">60</div>
<div class="t" style="right:0;top:93.2px;font-size:11px;color:#8c8c8c">40</div>
<div class="t" style="right:0;top:117.7px;font-size:11px;color:#8c8c8c">20</div>
<div class="t" style="right:0;top:142.2px;font-size:11px;color:#8c8c8c">0</div>
</div>
<div class="a" style="left:597.8px;top:534.4px;width:8px;height:156px;overflow:hidden">
<div class="t" style="right:0;top:9.1px;font-size:11px;color:#8c8c8c">12k</div>
<div class="t" style="right:0;top:31.5px;font-size:11px;color:#8c8c8c">10k</div>
<div class="t" style="right:0;top:54.1px;font-size:11px;color:#8c8c8c">8k</div>
<div class="t" style="right:0;top:75.5px;font-size:11px;color:#8c8c8c">6k</div>
<div class="t" style="right:0;top:97.8px;font-size:11px;color:#8c8c8c">4k</div>
<div class="t" style="right:0;top:120.4px;font-size:11px;color:#8c8c8c">2k</div>
<div class="t" style="right:0;top:141.8px;font-size:11px;color:#8c8c8c">0</div>
</div>
<div class="t" style="left:342.5px;top:691.5px;width:28px;text-align:center;font-size:11px;color:#a2a2a2">08:24</div>
<div class="t" style="left:399.6px;top:691.5px;width:28px;text-align:center;font-size:11px;color:#a2a2a2">08:24</div>
<div class="t" style="left:457.2px;top:691.5px;width:28px;text-align:center;font-size:11px;color:#a2a2a2">08:24</div>
<div class="t" style="left:514.7px;top:691.5px;width:28px;text-align:center;font-size:11px;color:#a2a2a2">08:25</div>
<div class="t" style="left:342.5px;top:702px;width:28px;text-align:center;font-size:9px;color:#9a9a9a">Mar 12</div>
<div class="t" style="left:654.4px;top:691px;width:28px;text-align:center;font-size:11px;color:#a2a2a2">08:24</div>
<div class="t" style="left:710.8px;top:691px;width:28px;text-align:center;font-size:11px;color:#a2a2a2">08:24</div>
<div class="t" style="left:768.6px;top:691px;width:28px;text-align:center;font-size:11px;color:#a2a2a2">08:24</div>
<div class="t" style="left:826.3px;top:691px;width:28px;text-align:center;font-size:11px;color:#a2a2a2">08:25</div>
<div class="t" style="left:654.4px;top:701.5px;width:28px;text-align:center;font-size:9px;color:#9a9a9a">Mar 12</div>
<!-- ============ RIGHT SCROLLBAR + PANEL ============ -->
<div class="a" style="left:947px;top:100px;width:15px;height:617px;background:#f1f1f1"></div>
<svg style="left:950.5px;top:107px" width="8" height="4" viewBox="0 0 8 4"><path d="M0 4 L4 0 L8 4 Z" fill="#505050"/></svg>
<div class="a" style="left:948.8px;top:128px;width:11.8px;height:272px;background:#c1c1c1"></div>
<svg style="left:950.5px;top:712px" width="8" height="4" viewBox="0 0 8 4"><path d="M0 0 L8 0 L4 4 Z" fill="#505050"/></svg>
<div class="a" style="left:962px;top:100px;width:1px;height:617px;background:#e3e6e8"></div>
<svg style="left:975px;top:112.5px" width="14" height="14" viewBox="0 0 14 14"><g fill="none" stroke="#5f6a72" stroke-width="1.3" stroke-linejoin="round"><path d="M7 0.9 C10.4 0.9 13 3.3 13 6.3 C13 9.3 10.4 11.7 7 11.7 C6.2 11.7 5.4 11.6 4.7 11.3 L1.2 12.8 L2.2 9.6 C1.4 8.7 1 7.5 1 6.3 C1 3.3 3.6 0.9 7 0.9 Z"/></g><circle cx="4.5" cy="6.3" r="0.8" fill="#5f6a72"/><circle cx="7" cy="6.3" r="0.8" fill="#5f6a72"/><circle cx="9.5" cy="6.3" r="0.8" fill="#5f6a72"/></svg>
<svg style="left:975px;top:144.5px" width="14" height="14" viewBox="0 0 14 14"><path d="M4 1 H10 M4.9 1 V6.2 L1.3 11.7 C0.9 12.4 1.3 13 2.1 13 H11.9 C12.7 13 13.1 12.4 12.7 11.7 L9.1 6.2 V1 M3 9.5 H11" fill="none" stroke="#5f6a72" stroke-width="1.3" stroke-linejoin="round"/></svg>
<svg style="left:974.5px;top:178.5px" width="15" height="14" viewBox="0 0 15 14"><g fill="none" stroke="#5f6a72" stroke-width="1.4" stroke-linecap="round" stroke-linejoin="round"><path d="M2 7 A5.8 5.8 0 1 0 3.8 2.8"/><path d="M0.6 5.3 L2 7.2 L3.8 5.5"/><path d="M8 3.8 V7.3 L10.2 8.8"/></g></svg>
<div class="t" style="left:973.5px;top:211.5px;font-size:11px;color:#5f6a72;letter-spacing:-0.6px;-webkit-text-stroke:0.2px #5f6a72">{×}</div>
<svg style="left:974.5px;top:242.5px" width="14" height="14" viewBox="0 0 14 14"><g fill="none" stroke="#5f6a72" stroke-width="1.3" stroke-linejoin="round"><rect x="0.8" y="4" width="2.8" height="9.2"/><rect x="4.8" y="1" width="2.8" height="12.2"/><path d="M8.8 5.2 L11 4.5 L13.3 13 L11.1 13.6 Z"/></g></svg>
<svg style="left:975px;top:699px" width="13" height="13" viewBox="0 0 13 13"><g fill="none" stroke="#5f6a72" stroke-width="1.3"><rect x="0.8" y="0.8" width="11.4" height="11.4" rx="0.8"/><path d="M0.8 9.3 H12.2"/></g></svg>
</body></html>
